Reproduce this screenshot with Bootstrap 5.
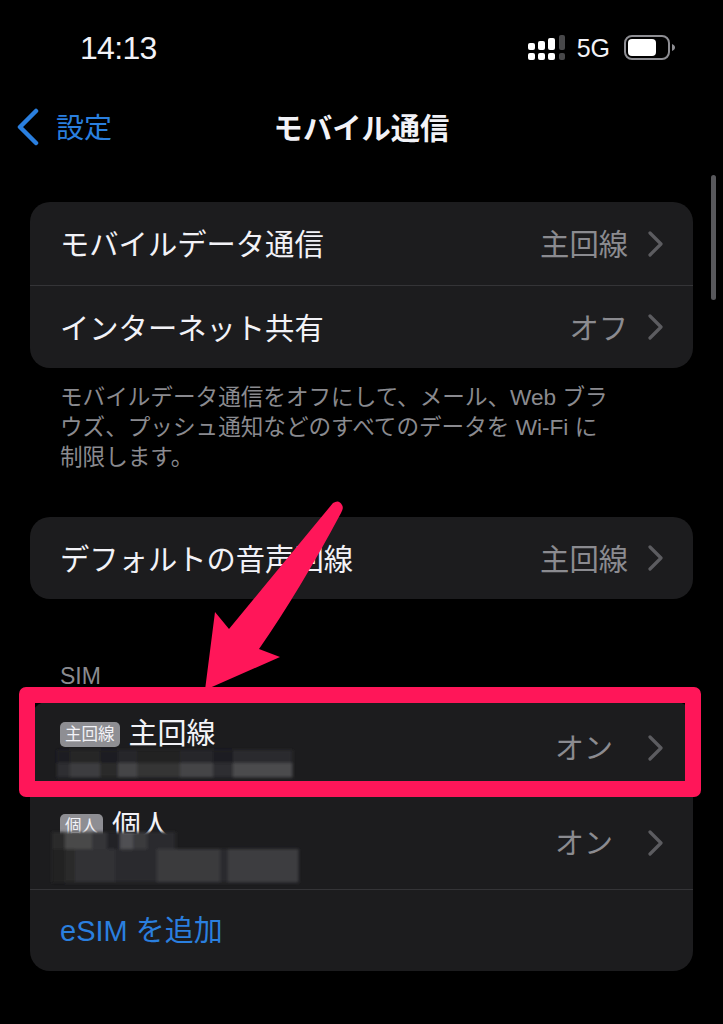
<!DOCTYPE html>
<html lang="ja">
<head>
  <meta charset="UTF-8" />
  <meta name="viewport" content="width=device-width, initial-scale=1.0">
  <title>モバイル通信</title>
  <link href="https://cdn.jsdelivr.net/npm/bootstrap@5.3.0/dist/css/bootstrap.min.css" rel="stylesheet">
  <style>
    body {
      background-color: #000;
      color: #f2f2f7;
      font-family: "Liberation Sans", "Noto Sans CJK JP", sans-serif;
    }
    .phone { width: 723px; height: 1024px; overflow: hidden; }
    .status-bar { height: 40px; margin: 28px 0 18px; padding: 0 48px 0 80px; }
    .status-time { font-size: 32px; letter-spacing: -.7px; line-height: 40px; }
    .status-net { font-size: 25px; line-height: 40px; margin: 0 14px 0 12px; }
    .nav-head { height: 82px; padding: 0 0 0 17px; }
    .nav-back { width: 200px; gap: 17px; color: #2a7fdf; font-size: 28px; }
    .nav-label { padding-top: 4px; }
    .nav-title { left: 0; right: 0; padding-top: 4px; font-size: 29.3px; font-weight: 700; pointer-events: none; }
    .scroll-thumb { left: 711px; top: 175px; width: 5px; height: 125px; border-radius: 3px; background: #58585c; }
    .ios-card { margin: 0 30px; background: #1c1c1e; border-radius: 20px; overflow: hidden; }
    .ios-card.first-card { margin-top: 34px; }
    .ios-row { height: 83px; padding: 0 29px 0 30px; font-size: 29.3px; }
    .ios-row + .ios-row { border-top: 1px solid #343437; }
    .ios-row.short { height: 82px; }
    .ios-row.tall { height: 94px; }
    .ios-row.nudge { padding-top: 2px; }
    .row-text { padding-top: 3px; }
    .row-value { color: #8b8b90; margin-right: 20px; padding-top: 3px; }
    .row-value.on-value { margin-right: 35px; font-size: 29px; padding-top: 4px; }
    .row-chev { flex: none; }
    .foot-note { margin: 15px 0 44px 60px; font-size: 22.6px; line-height: 30px; color: #8a8a8f; white-space: nowrap; }
    .sim-head { margin: 62px 0 10px 60px; font-size: 23px; line-height: 30px; color: #8a8a8f; }
    .sim-tag { background: #8e8e93; color: #f2f2f7; font-size: 16.5px; line-height: 25px; height: 25px; padding: 0 5px; border-radius: 5px; margin-right: 9px; }
    .sim-line { position: absolute; left: 30px; font-size: 29px; line-height: 34px; }
    .sim-line.line-one { top: 16px; }
    .sim-line.line-two { top: 14px; }
    .esim-link { color: #2a7fdf; font-size: 29px; }
    .over-art { left: 0; top: 0; pointer-events: none; }
  </style>
</head>
<body>
  <div class="phone position-relative">
    <!-- status bar -->
    <div class="status-bar d-flex align-items-center">
      <span class="status-time me-auto">14:13</span>
      <svg width="37" height="26" viewBox="0 0 37 26">
        <g fill="#fff">
          <rect x="0" y="8" width="7" height="7" rx="2"/><rect x="0" y="18" width="7" height="7" rx="2"/>
          <rect x="10" y="6" width="7" height="9" rx="2"/><rect x="10" y="18" width="7" height="7" rx="2"/>
          <rect x="20" y="3" width="7" height="12" rx="2"/><rect x="20" y="18" width="7" height="7" rx="2"/>
        </g>
        <g fill="#48484a">
          <rect x="31" y="0" width="6" height="15" rx="2"/><rect x="31" y="18" width="6" height="7" rx="2"/>
        </g>
      </svg>
      <span class="status-net">5G</span>
      <svg width="51" height="26" viewBox="0 0 51 26">
        <rect x="1" y="1" width="44" height="23" rx="7" fill="none" stroke="#8e8e93" stroke-width="2"/>
        <rect x="4" y="4" width="28" height="17" rx="4" fill="#fff"/>
        <path d="M48 9c2 .8 3 2 3 3.500s-1 2.700-3 3.500z" fill="#8e8e93"/>
      </svg>
    </div>

    <!-- nav -->
    <div class="nav-head d-flex align-items-center position-relative">
      <div class="nav-back d-flex align-items-center">
        <svg width="22" height="38" viewBox="0 0 22 38"><path d="M19 3 3 19l16 16" fill="none" stroke="#2a7fdf" stroke-width="4.500" stroke-linecap="round" stroke-linejoin="round"/></svg>
        <span class="nav-label">設定</span>
      </div>
      <div class="nav-title position-absolute text-center">モバイル通信</div>
    </div>

    <div class="scroll-thumb position-absolute"></div>

    <div class="ios-card first-card">
      <div class="ios-row d-flex align-items-center">
        <span class="row-text me-auto">モバイルデータ通信</span><span class="row-value">主回線</span>
        <svg class="row-chev" width="16" height="26" viewBox="0 0 16 26"><path d="M2 2l11 11L2 24" fill="none" stroke="#5c5c60" stroke-width="3.200" stroke-linecap="round" stroke-linejoin="round"/></svg>
      </div>
      <div class="ios-row d-flex align-items-center">
        <span class="row-text me-auto">インターネット共有</span><span class="row-value">オフ</span>
        <svg class="row-chev" width="16" height="26" viewBox="0 0 16 26"><path d="M2 2l11 11L2 24" fill="none" stroke="#5c5c60" stroke-width="3.200" stroke-linecap="round" stroke-linejoin="round"/></svg>
      </div>
    </div>
    <p class="foot-note">モバイルデータ通信をオフにして、メール、Web ブラ<br>ウズ、プッシュ通知などのすべてのデータを Wi-Fi に<br>制限します。</p>

    <div class="ios-card">
      <div class="ios-row short d-flex align-items-center">
        <span class="row-text me-auto">デフォルトの音声回線</span><span class="row-value">主回線</span>
        <svg class="row-chev" width="16" height="26" viewBox="0 0 16 26"><path d="M2 2l11 11L2 24" fill="none" stroke="#5c5c60" stroke-width="3.200" stroke-linecap="round" stroke-linejoin="round"/></svg>
      </div>
    </div>

    <div class="sim-head">SIM</div>
    <div class="ios-card">
      <div class="ios-row tall d-flex align-items-center position-relative">
        <div class="sim-line line-one d-flex align-items-center"><span class="sim-tag">主回線</span>主回線</div>
        <span class="ms-auto row-value on-value">オン</span>
        <svg class="row-chev" width="16" height="26" viewBox="0 0 16 26"><path d="M2 2l11 11L2 24" fill="none" stroke="#5c5c60" stroke-width="3.200" stroke-linecap="round" stroke-linejoin="round"/></svg>
      </div>
      <div class="ios-row tall nudge d-flex align-items-center position-relative border-0">
        <div class="sim-line line-two d-flex align-items-center"><span class="sim-tag">個人</span>個人</div>
        <span class="ms-auto row-value on-value">オン</span>
        <svg class="row-chev" width="16" height="26" viewBox="0 0 16 26"><path d="M2 2l11 11L2 24" fill="none" stroke="#5c5c60" stroke-width="3.200" stroke-linecap="round" stroke-linejoin="round"/></svg>
      </div>
      <div class="ios-row short d-flex align-items-center">
        <span class="row-text esim-link">eSIM を追加</span>
      </div>
    </div>

    <!-- annotation: mosaics, red box and arrow sit over the screenshot -->
    <svg class="over-art position-absolute" width="723" height="1024" viewBox="0 0 723 1024">
      <defs><filter id="soft"><feGaussianBlur stdDeviation="1.500"/></filter></defs>
      <g id="mosaics" filter="url(#soft)"></g>
      <path fill-rule="evenodd" d="M26 687H694a7 7 0 0 1 7 7V790a7 7 0 0 1-7 7H26a7 7 0 0 1-7-7V694a7 7 0 0 1 7-7ZM35 703V781H685V703Z" fill="#ff1659"/>
      <path d="M333 503Q339 499 342 505Q344 508 341 513Q300 590 259 649L280 657L205 690L215 612L229 629Q290 555 333 503Z" fill="#ff1659"/>
    </svg>
  </div>

  <script src="https://cdn.jsdelivr.net/npm/bootstrap@5.3.0/dist/js/bootstrap.bundle.min.js"></script>
  <script>
    // pixelated phone-number bands: y, height, then [x, width, grey] cells
    const bands = [
      [750, 13, [[57,13,30],[70,30,38],[100,18,30],[118,19,40],[137,43,33],[180,33,40],[213,20,30],[233,59,44]]],
      [763, 14, [[57,13,46],[70,30,62],[100,18,42],[118,19,68],[137,43,52],[180,33,68],[213,20,46],[233,59,76]]],
      [832, 17, [[52,13,42],[65,27,72],[92,15,54],[107,13,36],[120,13,80],[133,14,58],[147,28,44]]],
      [849, 33, [[52,13,34],[65,10,42],[75,40,50],[115,42,44],[157,63,58],[220,8,44],[228,70,62]]]
    ];
    const ns = "http://www.w3.org/2000/svg";
    const layer = document.getElementById("mosaics");
    bands.forEach(([y, h, cells]) => cells.forEach(([x, w, v]) => {
      const cell = document.createElementNS(ns, "rect");
      cell.setAttribute("x", x);
      cell.setAttribute("y", y);
      cell.setAttribute("width", w + 0.5);
      cell.setAttribute("height", h + 0.5);
      cell.setAttribute("fill", `rgb(${v},${v},${v + 2})`);
      layer.appendChild(cell);
    }));
  </script>
</body>
</html>
